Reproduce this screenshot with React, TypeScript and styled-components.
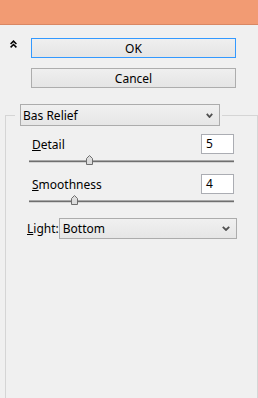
import React from "react";
import styled, { createGlobalStyle } from "styled-components";

const Global = createGlobalStyle`
  html, body { margin: 0; padding: 0; background: #f0f0f0; }
  body { width: 258px; height: 398px; overflow: hidden; font-family: "Noto Sans", "Open Sans", sans-serif; font-size: 12px; color: #000; }
  * { box-sizing: border-box; }
`;

const Page = styled.div`
  width: 258px;
  height: 398px;
  display: flex;
  flex-direction: column;
  background: #f0f0f0;
`;

const TitleBar = styled.div`
  height: 25px;
  flex: none;
  background: #f29b73;
  border-bottom: 1px solid #d98763;
`;

const Actions = styled.div`
  display: grid;
  grid-template-columns: 31px 205px;
  row-gap: 10px;
  padding-top: 13px;
`;

const IconCell = styled.div`
  display: flex;
  justify-content: flex-start;
  padding: 2px 0 0 10px;
`;

const Button = styled.button<{ $default?: boolean }>`
  grid-column: 2;
  height: 20px;
  margin: 0;
  padding: 0;
  font: inherit;
  font-size: 12px;
  color: #000;
  background: linear-gradient(#efefef, #e5e5e5);
  border: 1px solid ${(p) => (p.$default ? "#3399ff" : "#adadad")};
  line-height: 17px;
`;

const Group = styled.fieldset`
  margin: 16px 0 0 5px;
  padding: 0;
  width: 253px;
  min-width: 0;
  flex: 1;
  border: 1px solid #d5d5d5;
  border-bottom: none;
`;

const Legend = styled.legend`
  margin-left: 9px;
  padding: 0 2px 0 5px;
`;

const Select = styled.div<{ $w: number }>`
  width: ${(p) => p.$w}px;
  height: ${(p) => (p.$w > 190 ? 22 : 21)}px;
  display: flex;
  align-items: center;
  justify-content: space-between;
  padding: 0 6px 0 ${(p) => (p.$w > 190 ? 2 : 3)}px;
  background: linear-gradient(#f0f0f0, #e6e6e6);
  border: 1px solid #acacac;
  font-size: 12px;
`;

const Content = styled.div`
  display: flex;
  flex-direction: column;
  padding: 8px 20px 0 21px;
`;

const Row = styled.div`
  display: flex;
  align-items: center;
  justify-content: space-between;
  height: 20px;
  padding: 0 3px 0 5px;
`;

const NumberBox = styled.div`
  width: 33px;
  height: 20px;
  background: #fff;
  border: 1px solid #abadb3;
  padding: 0 0 0 4px;
  line-height: 18px;
  font-size: 12px;
`;

const SliderBlock = styled.div`
  position: relative;
  height: 20px;
  margin: 0 3px 0 2px;
`;

const Track = styled.div`
  position: absolute;
  left: 0;
  right: 0;
  top: 6px;
  height: 3px;
  background: linear-gradient(#a8a8a8 0 1px, #6f6f6f 1px 2px, #d4d4d4 2px 3px);
`;

const Thumb = styled.svg`
  position: absolute;
  top: 1px;
`;

const LightRow = styled.div`
  display: flex;
  align-items: center;
  justify-content: space-between;
  margin-top: 4px;
`;

const Key = styled.span`
  text-decoration: underline;
  text-underline-offset: 1px;
`;

const Chevron = ({ w }: { w: number }) => (
  <svg width={w} height={5} viewBox={`0 0 ${w} 5`}>
    <polyline points={`0.8,0.8 ${w / 2},4 ${w - 0.8},0.8`} fill="none" stroke="#505050" strokeWidth={1.8} />
  </svg>
);

const Slider = ({ value, min, max }: { value: number; min: number; max: number }) => {
  const pct = (value - min) / (max - min);
  return (
    <SliderBlock>
      <Track />
      <Thumb width={7} height={10} viewBox="0 0 7 10" style={{ left: `calc(${pct} * (100% - 7px))` }}>
        <path d="M0.5,9.5 V3.5 L3.5,0.5 L6.5,3.5 V9.5 Z" fill="#dcdcdc" stroke="#6e6e6e" />
      </Thumb>
    </SliderBlock>
  );
};

export default function App() {
  return (
    <Page>
      <Global />
      <TitleBar />
      <Actions>
        <IconCell>
          <svg width={7} height={8} viewBox="0 0 7 8">
            <polyline points="0.6,4 3.5,1.1 6.4,4" fill="none" stroke="#000" strokeWidth={1.5} />
            <polyline points="0.6,7.4 3.5,4.5 6.4,7.4" fill="none" stroke="#000" strokeWidth={1.5} />
          </svg>
        </IconCell>
        <Button $default>OK</Button>
        <Button>Cancel</Button>
      </Actions>
      <Group>
        <Legend>
          <Select $w={200}>
            <span>Bas Relief</span>
            <Chevron w={7} />
          </Select>
        </Legend>
        <Content>
          <Row>
            <span>
              <Key>D</Key>etail
            </span>
            <NumberBox>5</NumberBox>
          </Row>
          <Slider value={5} min={1} max={15} />
          <Row>
            <span>
              <Key>S</Key>moothness
            </span>
            <NumberBox>4</NumberBox>
          </Row>
          <Slider value={4} min={1} max={15} />
          <LightRow>
            <span>
              <Key>L</Key>ight:
            </span>
            <Select $w={179}>
              <span>Bottom</span>
              <Chevron w={8} />
            </Select>
          </LightRow>
        </Content>
      </Group>
    </Page>
  );
}
